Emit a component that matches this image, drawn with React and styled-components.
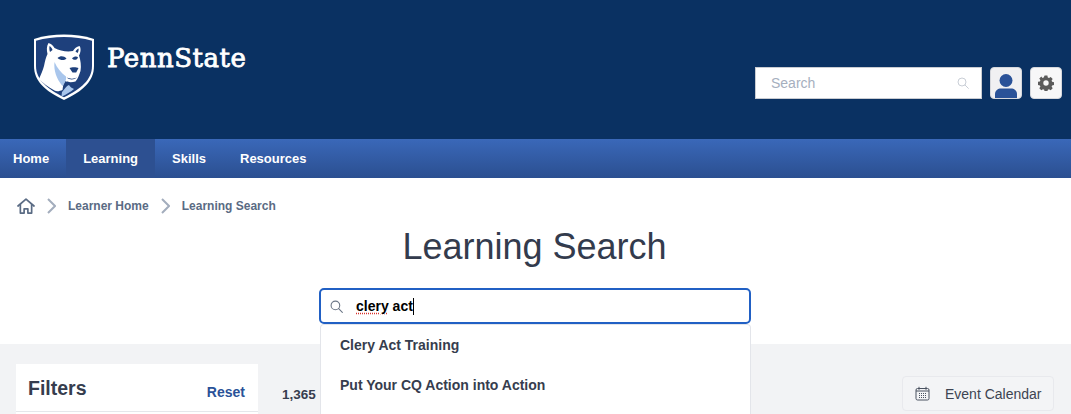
import React from 'react';
import styled, { createGlobalStyle } from 'styled-components';

const GlobalStyle = createGlobalStyle`
    html, body {
        margin: 0;
        height: 414px;
        overflow: hidden;
        background: #fff;
        font-family: "Liberation Sans", Arial, sans-serif;
    }
`

function Shield() {
    return (
        <svg width="62" height="67" viewBox="0 0 62 67">
            <path d="M1 5C11 1.800 21 .6 31 .6S51 1.800 61 5V32C61 47 50 57 31 66 12 57 1 47 1 32Z" fill="#fff" />
            <path d="M3 6.800C12 4.200 21 3 31 3S50 4.200 59 6.800V32C59 45.500 48 55 31 63.200 14 55 3 45.500 3 32Z" fill="#1e407c" />
            {/* lion: white head and neck */}
            <path d="M6 45C8 40 10 36 11 32 12 27 13 23 14.500 20 13.500 16 13.500 12 15.500 9 18 9.500 20 11.500 21.500 14 27 17 34 18 40 17 41.500 14.500 43.500 12.500 46.500 12 48 14 48 18 46 21.500 47.500 26 48.500 32 47.500 37 46 41 45 45 42.500 47.500 39 48.500 35 48.500 32 47 30.500 49 30 52 29.500 56 27 57 24 58 21.500 56.500 15 53 10 49 6 45Z" fill="#fff" />
            {/* light shading on the neck and chest */}
            <path d="M21.500 28C20.500 36 23.500 45 29.500 52 32 49 33.500 46 33 42.500 28 38.500 24 34 21.500 28ZM28.500 62 29 58C31 56 33 52 36 51 37 53 39 54 41 55 37.500 58 33 60.500 30 62Z" fill="#a9c6ec" />
            {/* ears, eyes, nose and mouth */}
            <path d="M16.500 12C18 13 19 14 19.500 16L17 18C16.300 16 16.200 14 16.500 12ZM45.500 14.500C45.800 16 45.500 17.500 44.500 19L42.500 17.500C43.300 16 44.300 15 45.500 14.500Z" fill="#1e407c" />
            <path d="M24.500 24C27.500 21.500 31 22 33.500 24.500 31 26.800 27.500 26.500 24.500 24ZM39 24.500C41 22.300 43.500 22 45 23.200 44.500 26 41 26.800 39 24.500ZM36.500 34C38.500 33 43.500 33 45.500 34L43.200 38.500H39.500Z" fill="#1e407c" />
            <path d="M33.500 43.500C37 45 41 45 44 43.500 41 46 36.500 46 33.500 43.500Z" fill="#1e407c" />
        </svg>
    )
}

function Magnifier({ size, color }) {
    return (
        <svg width={size} height={size} viewBox="0 0 12 12" fill="none" stroke={color} strokeWidth="1">
            <circle cx="5" cy="5" r="4" />
            <path d="M8 8l3.400 3.400" strokeLinecap="round" />
        </svg>
    )
}

function Gear() {
    return (
        <svg width="16" height="16" viewBox="0 0 16 16">
            <path fillRule="evenodd" fill="#5b5b5b" d="M6.600.5h2.800l.4 2 1.200.5 1.700-1.100 2 2-1.100 1.700.5 1.200 2 .4v2.800l-2 .4-.5 1.200 1.100 1.700-2 2-1.700-1.100-1.200.5-.4 2H6.600l-.4-2-1.200-.5-1.700 1.100-2-2 1.100-1.700-.5-1.200-2-.4V6.800l2-.4.5-1.200-1.100-1.700 2-2L4.500 3l1.200-.5ZM8 5.300a2.700 2.700 0 1 0 0 5.400 2.700 2.700 0 0 0 0-5.400Z" />
        </svg>
    )
}

function Person() {
    return (
        <svg width="30" height="30" viewBox="0 0 30 30">
            <circle cx="15" cy="12.500" r="6.500" fill="#2a5298" />
            <path d="M4 30v-4c0-3.500 3-5.500 6-5.500h10c3 0 6 2 6 5.500v4Z" fill="#2a5298" />
        </svg>
    )
}

function House() {
    return (
        <svg width="18" height="16" viewBox="0 0 19 17" fill="none" stroke="#5a6b84" strokeWidth="1.800" strokeLinejoin="round" strokeLinecap="round">
            <path d="M1 8.500 9.500 1.200 18 8.500" />
            <path d="M3.500 7v9h4v-4.500h4V16h4V7" />
        </svg>
    )
}

function Chevron() {
    return (
        <svg width="9" height="16" viewBox="0 0 9 16" fill="none" stroke="#a3adbd" strokeWidth="2">
            <path d="M1 1l7 7-7 7" />
        </svg>
    )
}

function CalendarIcon() {
    return (
        <svg width="15" height="15" viewBox="0 0 15 15" fill="none" stroke="#4a5261" strokeWidth="1">
            <rect x="1" y="2.500" width="13" height="11.500" rx="1.500" />
            <path d="M4 .8v3M11 .8v3M1 5h13" />
            <path d="M4 7.500h7M4 9.500h7M4 11.500h7" strokeDasharray="1 1" />
        </svg>
    )
}

export default function App() {
    return (
        <>
            <GlobalStyle />
            <Header>
                <Logo>
                    <Shield />
                    <Wordmark>PennState</Wordmark>
                </Logo>
                <HeaderTools>
                    <HeaderSearch>
                        <span>Search</span>
                        <Magnifier size={12} color="#c9ced6" />
                    </HeaderSearch>
                    <IconButton tone="#f0f0f2"><Person /></IconButton>
                    <IconButton tone="#f7f7f8"><Gear /></IconButton>
                </HeaderTools>
            </Header>

            <Nav>
                <NavItem>Home</NavItem>
                <NavItem active>Learning</NavItem>
                <NavItem>Skills</NavItem>
                <NavItem>Resources</NavItem>
            </Nav>

            <Breadcrumb>
                <House />
                <Chevron />
                <Crumb>Learner Home</Crumb>
                <Chevron />
                <Crumb>Learning Search</Crumb>
            </Breadcrumb>

            <Title>Learning Search</Title>

            <SearchWrap>
                <SearchBox>
                    <Magnifier size={13} color="#6b7686" />
                    <Typed><Misspelled>clery</Misspelled> act</Typed>
                    <Caret />
                </SearchBox>
                <Suggestions>
                    <Suggestion>Clery Act Training</Suggestion>
                    <Suggestion>Put Your CQ Action into Action</Suggestion>
                </Suggestions>
            </SearchWrap>

            <Content>
                <FilterCard>
                    <FilterHead>
                        <FilterTitle>Filters</FilterTitle>
                        <ResetLink>Reset</ResetLink>
                    </FilterHead>
                </FilterCard>
                <Results>
                    <Count>1,365</Count>
                    <CalendarButton>
                        <CalendarIcon />
                        Event Calendar
                    </CalendarButton>
                </Results>
            </Content>
        </>
    )
}

const Header = styled.header`
    height: 139px;
    box-sizing: border-box;
    background: #0a3162;
    display: flex;
    justify-content: space-between;
    padding: 34px 9px 0 33px;
`
const Logo = styled.div`
    display: flex;
    align-items: center;
    align-self: flex-start;
    gap: 12px;
`
const Wordmark = styled.span`
    font-family: "DejaVu Serif", serif;
    font-weight: 400;
    font-size: 26px;
    letter-spacing: 0.5px;
    -webkit-text-stroke: 0.8px #fff;
    color: #fff;
    margin-bottom: 19px;
`
const HeaderTools = styled.div`
    display: flex;
    gap: 8px;
    margin-top: 33px;
    align-self: flex-start;
`
const HeaderSearch = styled.div`
    width: 227px;
    height: 32px;
    box-sizing: border-box;
    background: #fff;
    border: 1px solid #c9ccd2;
    display: flex;
    align-items: center;
    justify-content: space-between;
    padding: 0 12px 0 15px;
    font-size: 14px;
    color: #a6afbe;
`
const IconButton = styled.div`
    width: 32px;
    height: 32px;
    box-sizing: border-box;
    background: ${props => props.tone};
    border: 1px solid #d5d7dc;
    border-radius: 4px;
    display: flex;
    align-items: center;
    justify-content: center;
    overflow: hidden;
`
const Nav = styled.nav`
    height: 39px;
    display: flex;
    background: linear-gradient(#3a68b9, #2b4f90);
`
const NavItem = styled.a`
    display: flex;
    align-items: center;
    padding: 0 17px;
    background: ${props => props.active ? '#2d5091' : 'transparent'};
    color: #fff;
    font-size: 13px;
    font-weight: 700;
    &:first-child {
        padding: 0 17px 0 13px;
    }
`
const Breadcrumb = styled.div`
    display: flex;
    align-items: center;
    height: 18px;
    padding: 19px 0 0 17px;
    gap: 12px;
`
const Crumb = styled.span`
    font-size: 12px;
    font-weight: 700;
    color: #5a6b84;
`
const Title = styled.h1`
    margin: 10px 0 0;
    text-align: center;
    font-size: 36px;
    line-height: 44px;
    font-weight: 400;
    color: #333b4d;
    transform: translateX(-1px);
`
const SearchWrap = styled.div`
    position: relative;
    z-index: 1;
    width: 432px;
    margin: 19px 0 0 319px;
`
const SearchBox = styled.div`
    height: 36px;
    box-sizing: border-box;
    background: #fff;
    border: 2px solid #2160c4;
    border-radius: 5px;
    display: flex;
    align-items: center;
    padding-left: 9px;
`
const Typed = styled.span`
    margin-left: 13px;
    font-size: 14px;
    font-weight: 700;
    color: #000;
`
const Misspelled = styled.span`
    text-decoration: underline dotted #d8322c;
    text-underline-offset: 2px;
`
const Caret = styled.span`
    width: 1px;
    height: 17px;
    background: #000;
`
const Suggestions = styled.ul`
    position: absolute;
    top: 36px;
    left: 1px;
    width: 431px;
    height: 90px;
    box-sizing: border-box;
    margin: 0;
    padding: 0;
    list-style: none;
    background: #fff;
    border: 1px solid #e3e5ea;
    border-bottom: 0;
    border-radius: 4px 4px 0 0;
`
const Suggestion = styled.li`
    height: 40px;
    display: flex;
    align-items: center;
    padding-left: 19px;
    font-size: 14px;
    font-weight: 700;
    color: #363d4e;
`
const Content = styled.main`
    margin-top: 20px;
    height: 70px;
    box-sizing: border-box;
    background: #f2f3f5;
    display: flex;
    padding: 20px 17px 0 16px;
`
const FilterCard = styled.aside`
    width: 242px;
    height: 50px;
    background: #fff;
`
const FilterHead = styled.div`
    height: 48px;
    box-sizing: border-box;
    border-bottom: 1px solid #e5e7eb;
    display: flex;
    align-items: center;
    justify-content: space-between;
    padding: 2px 13px 0 12px;
`
const FilterTitle = styled.h2`
    margin: 0;
    font-size: 19.500px;
    font-weight: 700;
    color: #363d4e;
`
const ResetLink = styled.a`
    font-size: 14px;
    font-weight: 700;
    color: #2a5298;
    margin-top: 6px;
`
const Results = styled.section`
    flex: 1;
    display: flex;
    align-items: flex-start;
    justify-content: space-between;
    padding-left: 24px;
`
const Count = styled.span`
    margin-top: 23px;
    font-size: 13.500px;
    font-weight: 700;
    color: #363d4e;
`
const CalendarButton = styled.button`
    margin-top: 12px;
    width: 152px;
    height: 35px;
    box-sizing: border-box;
    display: flex;
    align-items: center;
    gap: 15px;
    padding: 0 0 0 12px;
    background: #f3f4f6;
    border: 1px solid #e8e9ed;
    border-radius: 4px;
    font-family: inherit;
    font-size: 14px;
    color: #3d4452;
`
